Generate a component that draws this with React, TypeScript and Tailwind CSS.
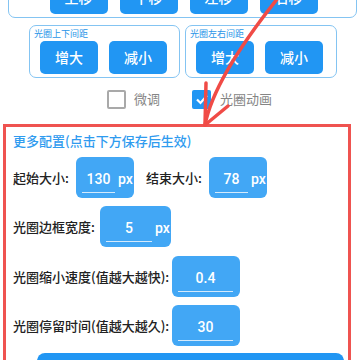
import React from "react";

const font = { fontFamily: '"Noto Sans CJK SC", Roboto, sans-serif' };

function Btn({ label, w = "w-[58px]" }: { label: string; w?: string }) {
  return (
    <div className={`${w} h-[33px] rounded-[5px] bg-[#2196f3] text-white text-[14px] font-medium flex items-center justify-center`}>
      {label}
    </div>
  );
}

function Field({ value, fw, unit, wrap }: { value: string; fw: string; unit?: boolean; wrap: string }) {
  return (
    <div className={`${wrap} h-[41px] rounded-[6px] bg-[#42a7f5] flex items-end pl-[6px] pb-[5px] text-white text-[14px] shrink-0`} style={{ fontFamily: 'Roboto, "Noto Sans CJK SC", sans-serif' }}>
      <div className={`${fw} border-b border-[#d4eafc] text-center leading-[20px] pb-[3px]`}>{value}</div>
      {unit && <div className="leading-[20px] pb-[4px] ml-[3px]">px</div>}
    </div>
  );
}

export default function App() {
  return (
    <div className="relative w-[360px] h-[360px] overflow-hidden bg-white" style={font}>
      {/* top move box */}
      <div className="ml-[8px] -mt-[26px] w-[349px] rounded-[7px] border-[1.5px] border-[#84c4f2] pt-[6px] pb-[3px] flex justify-center gap-[12px] pl-[2px]">
        <Btn label="上移" />
        <Btn label="下移" />
        <Btn label="左移" />
        <Btn label="右移" />
      </div>

      {/* spacing boxes */}
      <div className="mt-[7px] ml-[29px] flex gap-[5px]">
        {["光圈上下间距", "光圈左右间距"].map((t, i) => (
          <div key={t} className={`${i === 0 ? "w-[151px]" : "w-[152px]"} h-[53px] rounded-[7px] border-[1.5px] border-[#84c4f2] px-[4px] pt-[2px]`}>
            <div className="text-[9px] leading-[11px] text-[#2a95e8]">{t}</div>
            <div className="mt-[2px] flex gap-[11px] pl-[6px]">
              <Btn label="增大" />
              <Btn label="减小" />
            </div>
          </div>
        ))}
      </div>

      {/* checkboxes */}
      <div className="mt-[9px] ml-[107px] h-[24px] flex items-center">
        <div className="w-[19px] h-[19px] rounded-[2px] border-2 border-[#a9a9a9]" />
        <span className="ml-[8px] text-[13px] text-[#858585]">微调</span>
        <div className="ml-[32px] w-[19px] h-[19px] rounded-[2px] bg-[#2196f3] flex items-center justify-center">
          <svg width="14" height="14" viewBox="0 0 14 14">
            <path d="M2 7.5 L5.5 11 L12 3.5" fill="none" stroke="white" strokeWidth="2.2" />
          </svg>
        </div>
        <span className="ml-[9px] text-[13px] text-[#858585]">光圈动画</span>
      </div>

      {/* red box */}
      <div className="mt-[13px] ml-[3px] w-[348px] h-[260px] border-[3px] border-[#ef5350] pl-[7px] pt-[5px]">
        <div className="text-[13px] leading-[18px] text-[#2f9bef] font-medium">更多配置(点击下方保存后生效)</div>
        <div className="mt-[7px] flex items-center text-[13px] text-[#222] font-medium">
          <span className="w-[63px]">起始大小:</span>
          <Field value="130" fw="w-[33px]" unit wrap="w-[58px]" />
          <span className="ml-[12px] w-[63px]">结束大小:</span>
          <Field value="78" fw="w-[33px]" unit wrap="w-[58px]" />
        </div>
        <div className="mt-[8px] flex items-center text-[13px] text-[#222] font-medium">
          <span className="w-[87px]">光圈边框宽度:</span>
          <Field value="5" fw="w-[46px]" unit wrap="w-[71px]" />
        </div>
        <div className="mt-[9px] flex items-center text-[13px] text-[#222] font-medium">
          <span className="w-[159px]">光圈缩小速度(值越大越快):</span>
          <Field value="0.4" fw="w-[55px]" wrap="w-[68px]" />
        </div>
        <div className="mt-[8px] flex items-center text-[13px] text-[#222] font-medium">
          <span className="w-[159px]">光圈停留时间(值越大越久):</span>
          <Field value="30" fw="w-[55px]" wrap="w-[68px]" />
        </div>
        <div className="mt-[7px] ml-[24px] w-[307px] h-[40px] rounded-[8px] bg-[#2196f3]" />
      </div>

      {/* red arrow annotation */}
      <svg className="absolute left-0 top-0 pointer-events-none" width="360" height="360" viewBox="0 0 360 360">
        <path d="M278 -2 Q214 78 205 125" fill="none" stroke="#f04b46" strokeWidth="3.5" strokeLinecap="round" />
        <path d="M206 83 L205 125 L228 106" fill="none" stroke="#f04b46" strokeWidth="3.5" strokeLinecap="round" strokeLinejoin="round" />
      </svg>
    </div>
  );
}
